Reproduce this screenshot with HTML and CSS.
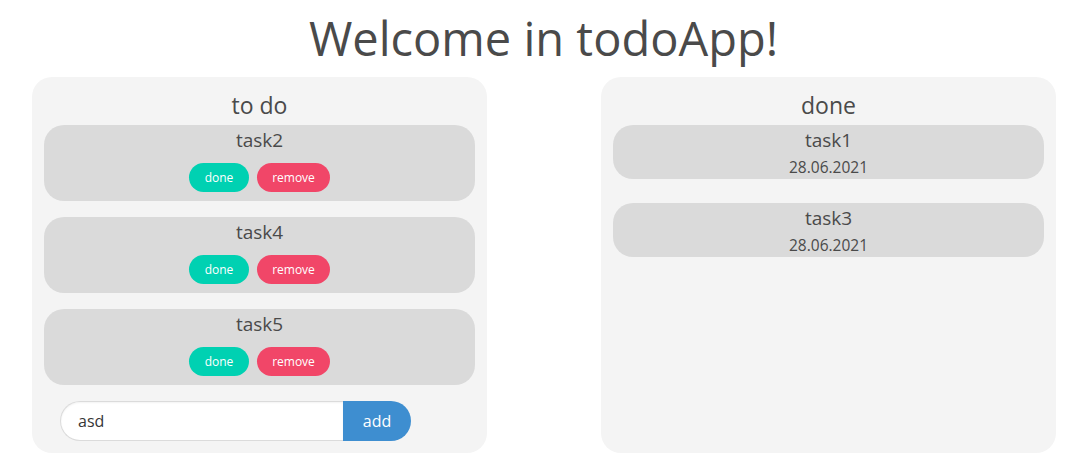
FILE: index.html
```html
<!DOCTYPE html>
<html>
<head>
<meta charset="utf-8">
<link rel="stylesheet" href="styles.css">
</head>
<body>
<h1 class="title">Welcome in todoApp!</h1>
<main class="columns">
  <section class="panel">
    <h2 class="panel-title">to do</h2>
    <div class="task task-todo">
      <div class="task-name">task2</div>
      <div class="actions">
        <button class="btn btn-done">done</button>
        <button class="btn btn-remove">remove</button>
      </div>
    </div>
    <div class="task task-todo">
      <div class="task-name">task4</div>
      <div class="actions">
        <button class="btn btn-done">done</button>
        <button class="btn btn-remove">remove</button>
      </div>
    </div>
    <div class="task task-todo">
      <div class="task-name">task5</div>
      <div class="actions">
        <button class="btn btn-done">done</button>
        <button class="btn btn-remove">remove</button>
      </div>
    </div>
    <form class="add-form">
      <input class="add-input" type="text" value="asd">
      <button class="add-btn" type="button">add</button>
    </form>
  </section>
  <section class="panel">
    <h2 class="panel-title">done</h2>
    <div class="task task-done">
      <div class="task-name">task1</div>
      <div class="task-date">28.06.2021</div>
    </div>
    <div class="task task-done">
      <div class="task-name">task3</div>
      <div class="task-date">28.06.2021</div>
    </div>
  </section>
</main>
</body>
</html>
```
FILE: styles.css
```css
* { box-sizing: border-box; }
html, body { margin: 0; padding: 0; }
body {
  font-family: "Open Sans", "Noto Sans", sans-serif;
  color: #4a4a4a;
  background: #fff;
}
.title {
  margin: 0;
  padding-top: 8px;
  height: 77px;
  text-align: center;
  font-size: 47px;
  font-weight: 400;
  line-height: 60px;
}
.columns {
  display: flex;
  justify-content: space-between;
  padding: 0 31px 0 32px;
}
.panel {
  width: 455px;
  height: 376px;
  background: #f4f4f4;
  border-radius: 20px;
  padding: 12px 12px;
}
.panel-title {
  margin: 0;
  padding-bottom: 4px;
  text-align: center;
  font-size: 23px;
  font-weight: 400;
  line-height: 32px;
}
.task {
  background: #dadada;
  border-radius: 20px;
  text-align: center;
}
.task-todo {
  height: 76px;
  margin-bottom: 16px;
}
.task-done {
  height: 54px;
  margin-bottom: 24px;
}
.task-name {
  font-size: 19px;
  line-height: 30px;
}
.task-date {
  font-size: 15.5px;
  line-height: 24px;
}
.actions {
  display: flex;
  justify-content: center;
  gap: 8px;
  margin-top: 8px;
}
.btn {
  border: none;
  border-radius: 15px;
  height: 29px;
  color: #fff;
  font-family: inherit;
  font-size: 12px;
  padding: 0;
}
.btn-done { background: #00d1b2; width: 60px; }
.btn-remove { background: #f14668; width: 73px; }
.add-form {
  display: flex;
  margin: 16px 0 0 16px;
}
.add-input {
  width: 283px;
  height: 40px;
  border: 1px solid #dbdbdb;
  border-right: none;
  border-radius: 20px 0 0 20px;
  padding: 0 0 0 17px;
  font-family: inherit;
  font-size: 16px;
  color: #363636;
  outline: none;
  box-shadow: inset 0 1px 2px rgba(10,10,10,0.05);
}
.add-btn {
  width: 68px;
  height: 40px;
  border: none;
  border-radius: 0 20px 20px 0;
  background: #3e8ed0;
  color: #fff;
  font-family: inherit;
  font-size: 16px;
  padding: 0;
}
```
